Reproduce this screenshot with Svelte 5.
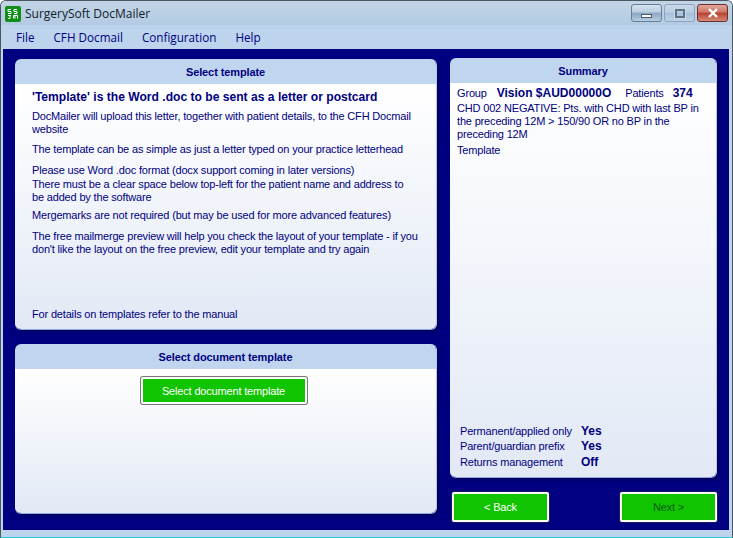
<script lang="ts">
	const menus = ['File', 'CFH Docmail', 'Configuration', 'Help'];
	const options = [
		{ label: 'Permanent/applied only', value: 'Yes' },
		{ label: 'Parent/guardian prefix', value: 'Yes' },
		{ label: 'Returns management', value: 'Off' }
	];
</script>

<div class="window">
	<header class="titlebar">
		<svg class="logo" viewBox="0 0 16 16" aria-hidden="true">
			<rect width="16" height="16" rx="2" fill="#0f8f1a" />
			<g fill="none" stroke="#fff" stroke-width="1">
				<path d="M3 3.5h3M3 3.5v2h3v2H3M9 3.5h3M9 3.5v2h3v2H9" />
				<path d="M3 9.5h3M5 9.5v3H3M8.5 12.5v-3h1.5v3M10 9.5h2.5v3" />
			</g>
		</svg>
		<span class="app-title">SurgerySoft DocMailer</span>
		<div class="controls">
			<div class="ctl">
				<span class="min-glyph"></span>
			</div>
			<div class="ctl ctl-dim">
				<span class="max-glyph"></span>
			</div>
			<div class="ctl ctl-close">
				<svg viewBox="0 0 12 10" width="12" height="10" aria-hidden="true">
					<path d="M2 1l8 8M10 1l-8 8" stroke="#fff" stroke-width="2.4" fill="none" />
				</svg>
			</div>
		</div>
	</header>

	<nav class="menubar">
		{#each menus as item}
			<span class="menu-item">{item}</span>
		{/each}
	</nav>

	<main class="workspace">
		<div class="col-left">
			<section class="panel panel-info">
				<h2 class="panel-head">Select template</h2>
				<div class="panel-body info-body">
					<p class="lead">'Template' is the Word .doc to be sent as a letter or postcard</p>
					<p class="p1">
						DocMailer will upload this letter, together with patient details, to the CFH Docmail
						website
					</p>
					<p class="p2">The template can be as simple as just a letter typed on your practice letterhead</p>
					<p class="p3">Please use Word .doc format (docx support coming in later versions)</p>
					<p class="p4">
						There must be a clear space below top-left for the patient name and address to<br />be
						added by the software
					</p>
					<p class="p5">Mergemarks are not required (but may be used for more advanced features)</p>
					<p class="p6">
						The free mailmerge preview will help you check the layout of your template - if you
						don't like the layout on the free preview, edit your template and try again
					</p>
					<p class="details">For details on templates refer to the manual</p>
				</div>
			</section>

			<section class="panel panel-select">
				<h2 class="panel-head">Select document template</h2>
				<div class="panel-body select-body">
					<button class="green-btn doc-btn">Select document template</button>
				</div>
			</section>
		</div>

		<div class="col-right">
			<section class="panel panel-summary">
				<h2 class="panel-head summary-head">Summary</h2>
				<div class="panel-body summary-body">
					<div class="group-row">
						<span>Group</span>
						<strong class="group-name">Vision $AUD00000O</strong>
						<span class="patients">Patients</span>
						<strong class="count">374</strong>
					</div>
					<p class="criteria">
						CHD 002 NEGATIVE: Pts. with CHD with last BP in the preceding 12M &gt; 150/90 OR no BP in
						the<br />preceding 12M
					</p>
					<p class="template-label">Template</p>
					<dl class="options">
						{#each options as opt}
							<div class="option">
								<dt>{opt.label}</dt>
								<dd>{opt.value}</dd>
							</div>
						{/each}
					</dl>
				</div>
			</section>

			<div class="nav-buttons">
				<button class="green-btn nav-btn">&lt; Back</button>
				<button class="green-btn nav-btn next">Next &gt;</button>
			</div>
		</div>
	</main>

	<div class="bottom-strip"></div>
</div>

<style>
	:global(body) {
		margin: 0;
		background: #fff;
	}

	.window {
		box-sizing: border-box;
		width: 733px;
		height: 538px;
		display: flex;
		flex-direction: column;
		background: #bdd4ec;
		border: 1px solid #4a5660;
		border-bottom-color: #2fc0d8;
		border-radius: 6px 6px 0 0;
		overflow: hidden;
		font-family: 'Liberation Sans', Arial, sans-serif;
		font-size: 11px;
		letter-spacing: -0.17px;
		color: #000080;
	}

	.titlebar {
		flex: none;
		height: 24px;
		display: flex;
		align-items: center;
		padding: 0 4px 0 4px;
		background: linear-gradient(#c3d4e6, #b3cbe3);
	}

	.logo {
		width: 16px;
		height: 16px;
		margin-top: 1px;
	}

	.app-title {
		margin-left: 4px;
		font-family: 'Open Sans', sans-serif;
		font-size: 12px;
		letter-spacing: 0;
		color: #10202c;
	}

	.controls {
		margin-left: auto;
		margin-top: 3px;
		display: flex;
		gap: 2px;
		align-self: flex-start;
	}

	.ctl {
		box-sizing: border-box;
		width: 31px;
		height: 18px;
		display: flex;
		align-items: center;
		justify-content: center;
		border: 1px solid #6a7c90;
		border-radius: 3px;
		background: linear-gradient(#d6e2ee 0%, #b9cde0 45%, #8ba6c2 50%, #b6cde2 100%);
	}

	.ctl-dim {
		border-color: #8ea4ba;
		background: linear-gradient(#c8d9ea 0%, #b9cee4 45%, #a6bfd9 50%, #bcd2e8 100%);
	}

	.ctl-close {
		border-color: #6a3030;
		background: linear-gradient(#e2a698 0%, #cf7565 45%, #b8402c 50%, #d48a78 100%);
	}

	.min-glyph {
		width: 9px;
		height: 2px;
		margin-top: 5px;
		background: #fff;
		border: 1px solid #4a5a6c;
	}

	.max-glyph {
		box-sizing: border-box;
		width: 10px;
		height: 9px;
		border: 2px solid #5d7186;
		box-shadow: 0 0 0 1px #c8d8e8;
	}

	.menubar {
		flex: none;
		height: 24px;
		display: flex;
		align-items: center;
		gap: 19px;
		padding: 0 0 0 15px;
		font-family: 'Open Sans', sans-serif;
		font-size: 11.7px;
		letter-spacing: 0;
		background: #bdd4ec;
	}

	.workspace {
		flex: none;
		height: 481px;
		margin: 0 3px 0 2px;
		box-sizing: border-box;
		padding: 10px 11px 0 12px;
		display: flex;
		gap: 13px;
		background: #000080;
	}

	.col-left {
		width: 422px;
		display: flex;
		flex-direction: column;
		gap: 14px;
		flex: none;
	}

	.col-right {
		width: 267px;
		flex: none;
		margin-top: -1px;
		display: flex;
		flex-direction: column;
	}

	.panel {
		box-sizing: border-box;
		display: flex;
		flex-direction: column;
		border-radius: 6px;
		overflow: hidden;
		border-bottom: 1px solid #8ea6dc;
		border-right: 1px solid #b8c8e8;
		box-shadow: 2px 2px 3px rgba(0, 0, 30, 0.35);
	}

	.panel-info {
		height: 271px;
	}

	.panel-select {
		height: 170px;
	}

	.panel-summary {
		height: 420px;
	}

	.panel-head {
		flex: none;
		height: 25px;
		margin: 0;
		display: flex;
		align-items: center;
		justify-content: center;
		background: #c0d6ee;
		font-size: 11px;
		font-weight: 700;
		color: #000080;
		letter-spacing: -0.1px;
	}

	.panel-body {
		flex: 1;
		background: linear-gradient(#ffffff, #e2e9f5);
	}

	p {
		margin: 0;
	}

	.info-body {
		padding: 5px 17px 0;
		display: flex;
		flex-direction: column;
		line-height: 13px;
	}

	.lead {
		font-size: 12.1px;
		font-weight: 700;
		line-height: 16px;
		letter-spacing: 0;
	}

	.p1 {
		margin-top: 5px;
	}

	.p2 {
		margin-top: 7px;
	}

	.p3 {
		margin-top: 8px;
	}

	.p4 {
		margin-top: 1px;
	}

	.p5 {
		margin-top: 5px;
	}

	.p6 {
		margin-top: 8px;
	}

	.details {
		margin-top: auto;
		margin-bottom: 8px;
	}

	.select-body {
		display: flex;
		justify-content: center;
		align-items: flex-start;
		padding-top: 8px;
	}

	.green-btn {
		box-sizing: border-box;
		background: #10c400;
		border: 2px solid #fff;
		font-family: inherit;
		font-size: 11px;
		letter-spacing: -0.17px;
		color: #fff;
		padding: 0;
	}

	.doc-btn {
		width: 166px;
		height: 27px;
		border-radius: 2px;
		box-shadow: 0 0 0 1px #777;
		margin-left: -4px;
	}

	.summary-body {
		display: flex;
		flex-direction: column;
		padding: 3px 7px 0;
		line-height: 13px;
	}

	.group-row {
		display: flex;
		align-items: baseline;
		line-height: 14px;
	}

	.group-row strong {
		font-size: 12px;
		font-weight: 700;
		letter-spacing: 0;
	}

	.group-name {
		margin-left: 10px;
	}

	.patients {
		margin-left: 14px;
	}

	.count {
		margin-left: 9px;
	}

	.criteria {
		margin-top: 2px;
	}

	.template-label {
		margin-top: 3px;
	}

	.options {
		margin: auto 0 7px 3px;
	}

	.option {
		display: flex;
		height: 15.5px;
		align-items: center;
	}

	.option dt {
		width: 121px;
		white-space: nowrap;
	}

	.option dd {
		margin: 0;
		font-weight: 700;
		font-size: 12px;
		letter-spacing: 0;
	}

	.nav-buttons {
		margin-top: 14px;
		padding-left: 2px;
		display: flex;
		justify-content: space-between;
	}

	.nav-btn {
		width: 97px;
		height: 30px;
		border-radius: 2px;
		box-shadow: 0 0 0 1px #1a1a60;
	}

	.next {
		color: #0b5c10;
	}

	.bottom-strip {
		flex: 1;
		background: #bdd4ec;
	}
</style>
